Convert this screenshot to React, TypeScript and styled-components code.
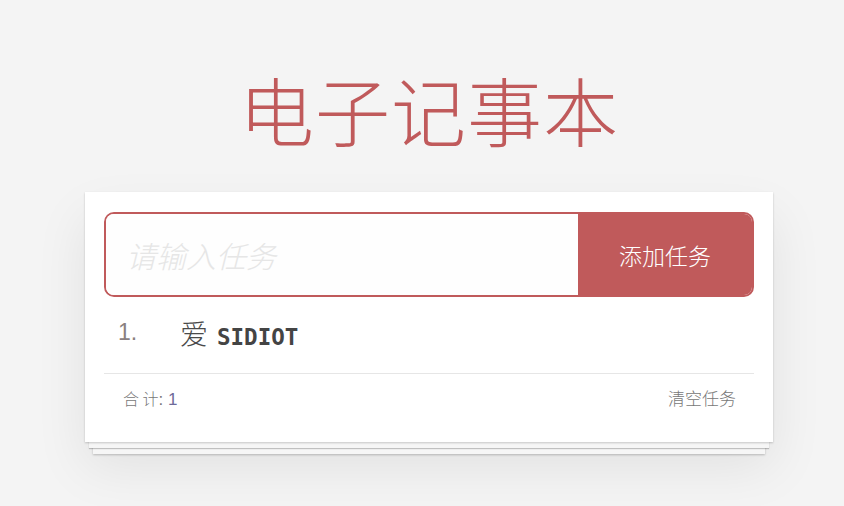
import styled, { createGlobalStyle } from "styled-components";

const GlobalStyle = createGlobalStyle`
  html, body {
    margin: 0;
    padding: 0;
    background: #f4f4f4;
    font-family: "Noto Sans CJK SC", "Noto Sans", sans-serif;
  }
`;

const Page = styled.div`
  width: 844px;
  height: 506px;
  box-sizing: border-box;
  padding-left: 14px;
  padding-top: 60px;
  overflow: hidden;
`;

const Title = styled.h1`
  margin: 0 0 34px;
  text-align: center;
  font-size: 75px;
  line-height: 98px;
  font-weight: 300;
  color: #c05a5b;
  letter-spacing: 1px;
  font-family: "Noto Sans CJK SC", sans-serif;
`;

const Card = styled.section`
  width: 688px;
  margin: 0 auto;
  box-sizing: border-box;
  background: #fff;
  padding: 20px 19px 0;
  box-shadow:
    0 1px 2px rgba(0, 0, 0, 0.2),
    0 10px 0 -4px #f6f6f6,
    0 11px 1px -4px rgba(0, 0, 0, 0.22),
    0 20px 0 -8px #f6f6f6,
    0 21px 2px -8px rgba(0, 0, 0, 0.22),
    0 25px 50px 0 rgba(0, 0, 0, 0.08);
`;

const Entry = styled.div`
  display: flex;
  height: 85px;
  box-sizing: border-box;
  border: 2px solid #c05a5b;
  border-radius: 10px;
  overflow: hidden;
`;

const NewTodo = styled.input`
  flex: 1;
  min-width: 0;
  border: none;
  outline: none;
  padding: 0 0 0 20px;
  background: #fefefe;
  font-family: "Noto Sans CJK SC", sans-serif;
  font-size: 30px;
  color: #4d4d4d;

  &::placeholder {
    font-style: italic;
    font-weight: 300;
    color: #e6e6e6;
  }
`;

const AddButton = styled.button`
  width: 174px;
  border: none;
  background: #c05a5b;
  color: #fff;
  font-family: "Noto Sans CJK SC", sans-serif;
  font-size: 23px;
  font-weight: 300;
  cursor: pointer;
`;

const TodoList = styled.ul`
  list-style: none;
  margin: 0;
  padding: 0;
`;

const Todo = styled.li`
  display: flex;
  align-items: center;
  height: 77px;
  box-sizing: border-box;
  padding-bottom: 5px;
  border-bottom: 1px solid #e6e6e6;
`;

const Index = styled.span`
  width: 62px;
  padding-left: 14px;
  font-family: "Liberation Sans", sans-serif;
  font-size: 23px;
  color: #8a8080;
`;

const Label = styled.label`
  display: flex;
  align-items: baseline;
  gap: 9px;
  color: #4a4a4a;
`;

const Han = styled.span`
  font-family: "Noto Sans CJK SC", sans-serif;
  font-weight: 300;
  font-size: 28px;
`;

const Mono = styled.span`
  font-family: "DejaVu Sans Mono", monospace;
  font-weight: bold;
  font-size: 22.5px;
  color: #444;
`;

const Footer = styled.footer`
  display: flex;
  justify-content: space-between;
  align-items: flex-start;
  height: 68px;
  box-sizing: border-box;
  padding: 12px 18px 0 19px;
  line-height: 24px;
  font-family: "Noto Sans CJK SC", sans-serif;
  font-size: 16px;
  color: #777;
`;

const Count = styled.span`
  font-weight: 300;
  white-space: pre;
`;

const Colon = styled.span`
  font-family: "Liberation Sans", sans-serif;
  font-size: 17px;
`;

const Strong = styled.strong`
  font-weight: normal;
  color: #6e6a9a;
  font-family: "Liberation Sans", sans-serif;
  font-size: 17px;
`;

const Clear = styled.button`
  border: none;
  background: none;
  padding: 0;
  line-height: 24px;
  font-family: "Noto Sans CJK SC", sans-serif;
  font-size: 17px;
  font-weight: 300;
  color: #777;
  cursor: pointer;
`;

const App = () => {
  const todos = [{ id: 1, han: "爱", text: "SIDIOT" }];
  return (
    <Page>
      <GlobalStyle />
      <Title>电子记事本</Title>
      <Card>
        <Entry>
          <NewTodo placeholder="请输入任务" />
          <AddButton>添加任务</AddButton>
        </Entry>
        <TodoList>
          {todos.map((todo, i) => (
            <Todo key={todo.id}>
              <Index>{i + 1}.</Index>
              <Label>
                <Han>{todo.han}</Han>
                <Mono>{todo.text}</Mono>
              </Label>
            </Todo>
          ))}
        </TodoList>
        <Footer>
          <Count>
            合 计<Colon>: </Colon>
            <Strong>{todos.length}</Strong>
          </Count>
          <Clear>清空任务</Clear>
        </Footer>
      </Card>
    </Page>
  );
};

export default App;
